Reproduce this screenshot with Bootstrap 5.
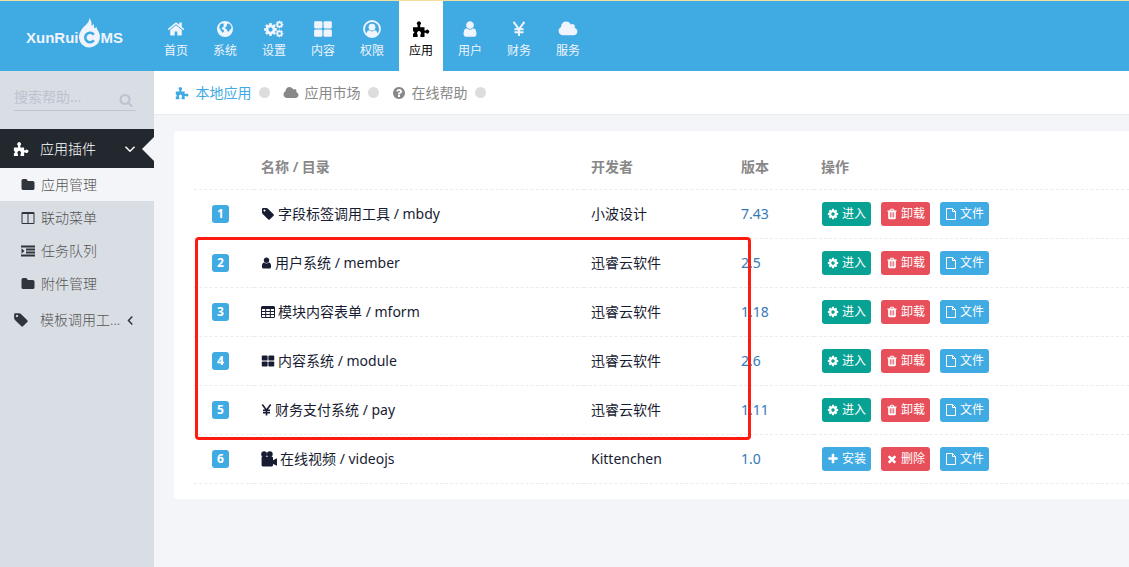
<!DOCTYPE html>
<html lang="zh-CN">
<head>
<meta charset="utf-8">
<meta name="viewport" content="width=device-width, initial-scale=1">
<title>应用管理 - XunRuiCMS</title>
<link rel="stylesheet" href="https://cdn.jsdelivr.net/npm/bootstrap@5.3.0/dist/css/bootstrap.min.css">
<style>
  :root { --brand: #40aae3; --side: #d9dde4; --page: #f4f5f8; }
  body { font-family: "Noto Sans", "Noto Sans CJK SC", sans-serif; font-size: 14px; line-height: 20px; background: var(--page); color: #181c32; }
  .ico { width: 14px; height: 14px; fill: currentColor; flex: none; }
  .ico-wide { width: 16px; height: 16px; fill: currentColor; flex: none; }
  .ico-slim { width: 11px; height: 14px; fill: currentColor; flex: none; }
  .ico-lg { width: 20px; height: 18px; fill: currentColor; margin-bottom: 2px; }

  .topbar { background: var(--brand); border-top: 1px solid #f0dfa0; height: 71px; }
  .brand-box { width: 154px; padding-left: 26px; flex: none; color: #f0f4fd; font: bold 15px/20px "Liberation Sans", sans-serif; }
  .brand-box:hover { color: #f0f4fd; }
  .brand-box span { margin-top: 4px; }
  .brand-box svg { width: 22px; height: 30px; fill: currentColor; margin-bottom: 6px; }
  .topnav { gap: 5px; }
  .topnav .nav-link { width: 44px; height: 70px; padding: 19px 0 0; color: #f0f4fd; font-size: 12px; line-height: 22px; text-align: center; }
  .topnav .nav-link.active { background: #fff; color: #000; }

  .side { width: 154px; flex: none; background: var(--side); }
  .search { margin: 14px 18px 18px 14px; border-bottom: 1px solid #bfc6d1; height: 26px; }
  .search input { min-width: 0; background: none; border: 0; padding: 0 0 2px; font-size: 14px; line-height: 20px; outline: 0; color: #555; }
  .search input::placeholder { color: #bcc3cf; }
  .search button { border: 0; background: none; padding: 4px 3px 0 0; color: #bcc3cf; }
  .side .nav-link { color: #555; font-weight: 300; padding: 0 0 0 21px; height: 33px; gap: 6px; }
  .side .nav-link svg { color: #2f353b; }
  .side .nav-link.group { height: 39px; padding: 0 17px 0 13px; gap: 11px; }
  .side .nav-link.group span { min-width: 0; white-space: nowrap; }
  .side .nav-link.open { background: #22282e; color: #fff; position: relative; }
  .side .nav-link.open svg { color: #fff; }
  .side .nav-link.open::after { content: ""; position: absolute; right: 0; top: 8px; border: 12px solid transparent; border-left: 0; border-right-color: var(--page); }
  .side .nav-link.active { background: var(--page); }

  .tabs { background: #fff; border-bottom: 1px solid #e9ecf1; height: 44px; padding-left: 21px; }
  .tabs a { color: #888; text-decoration: none; gap: 5px; }
  .tabs a.active { color: var(--brand); }
  .dot { width: 11px; height: 11px; border-radius: 50%; background: #ddd; margin: 0 13px 0 8px; }

  .panel { margin: 16px 0 0 20px; padding: 15px 0 15px 20px; background: #fff; border-radius: 4px 0 0 4px; }
  .apps { table-layout: fixed; margin: 0; color: inherit; --bs-table-bg: transparent; }
  .apps th, .apps td { height: 49px; padding: 0 7px; vertical-align: middle; border-bottom: 1px dashed #ececec; color: inherit; }
  .apps thead th { height: 43px; color: #888; font-weight: 600; }
  .apps td:first-child { padding-right: 15px; text-align: center; }
  .apps td:nth-child(4) { color: #337ab7; }
  .c-no { width: 60px; } .c-name { width: 330px; } .c-dev { width: 150px; } .c-ver { width: 80px; }
  .apps .badge { display: block; margin-left: 11px; background: var(--brand); font-size: 12px; line-height: 18px; padding: 0; width: 17px; height: 18px; border-radius: 3px; }
  .app-name { gap: 3px; }
  .ops { gap: 10px; padding-left: 1px; }
  .act { color: #fff; font-size: 12px; line-height: 24px; height: 24px; padding: 0 5px; border: 0; border-radius: 3px; gap: 3px; }
  .act:hover { color: #fff; }
  .act .ico { width: 12px; height: 12px; }
  .act-go { background: #08a294; } .act-del { background: #e7505a; } .act-file { background: var(--brand); }
  .highlight { position: absolute; left: 1px; top: 91px; width: 556px; height: 203px; border: 3px solid #ff1b10; border-radius: 4px; pointer-events: none; }
</style>
</head>
<body class="min-vh-100 d-flex flex-column">

<svg class="d-none">
  <symbol id="home" viewBox="0 0 1792 1792"><path d="M1472 992v480q0 26-19 45t-45 19h-384v-384h-256v384h-384q-26 0-45-19t-19-45v-480q0-1 .5-3t.5-3l575-474 575 474q1 2 1 6zm223-69l-62 74q-8 9-21 11h-3q-13 0-21-7l-692-577-692 577q-12 8-24 7-13-2-21-11l-62-74q-8-10-7-23.500t11-21.500l719-599q32-26 76-26t76 26l244 204v-195q0-14 9-23t23-9h192q14 0 23 9t9 23v408l219 182q10 8 11 21.500t-7 23.500z"/></symbol>
  <symbol id="globe" viewBox="0 0 18 18"><path fill-rule="evenodd" d="M9 1a8 8 0 1 1 0 16A8 8 0 0 1 9 1zM11 4l2.200-.6 2.200 3 .1 1.600-1.600 2-1.300 1.800-1.200-.6-.4-1.800-1.600-.6-.2-1.500 1.500-1zM4 4.800l1.600-1.300 2.600.2-.8 1.400.4 1.300-1.500 1-1 1.100 1.500 1 1.400 1-.6 1.400-1.200.8-1.600-2.400L3.200 8z"/></symbol>
  <symbol id="cog" viewBox="0 0 1792 1792"><path d="M1152 896q0-106-75-181t-181-75-181 75-75 181 75 181 181 75 181-75 75-181zm512-109v222q0 12-8 23t-20 13l-185 28q-19 54-39 91 35 50 107 138 10 12 10 25t-9 23q-27 37-99 108t-94 71q-12 0-26-9l-138-108q-44 23-91 38-16 136-29 186-7 28-36 28h-222q-14 0-24.500-8.500t-11.500-21.500l-28-184q-49-16-90-37l-141 107q-10 9-25 9-14 0-25-11-126-114-165-168-7-10-7-23 0-12 8-23 15-21 51-66.500t54-70.500q-27-50-41-99l-183-27q-13-2-21-12.500t-8-23.500v-222q0-12 8-23t19-13l186-28q14-46 39-92-40-57-107-138-10-12-10-24 0-10 9-23 26-36 98.500-107.500t94.500-71.500q13 0 26 10l138 107q44-23 91-38 16-136 29-186 7-28 36-28h222q14 0 24.500 8.500t11.500 21.500l28 184q49 16 90 37l142-107q9-9 24-9 13 0 25 10 129 119 165 170 7 8 7 22 0 12-8 23-15 21-51 66.500t-54 70.500q26 50 41 98l183 28q13 2 21 12.500t8 23.500z"/></symbol>
  <symbol id="cogs" viewBox="0 0 20 18"><use href="#cog" x="-1" y="2" width="15" height="15"/><use href="#cog" x="11" y="0" width="9" height="9"/><use href="#cog" x="11" y="9" width="9" height="9"/></symbol>
  <symbol id="grid" viewBox="0 0 18 16"><rect x="1" y="1" width="7.500" height="6.500" rx="1.200"/><rect x="9.500" y="1" width="7.500" height="6.500" rx="1.200"/><rect x="1" y="8.500" width="7.500" height="6.500" rx="1.200"/><rect x="9.500" y="8.500" width="7.500" height="6.500" rx="1.200"/></symbol>
  <symbol id="user-circle" viewBox="0 0 18 18"><circle cx="9" cy="9" r="8" fill="none" stroke="currentColor" stroke-width="1.800"/><circle cx="9" cy="7.200" r="3.400"/><path d="M3 14.500c.4-2.300 1.300-3.800 3-4.200 1.800 1.500 4.200 1.500 6 0 1.700.4 2.600 1.900 3 4.200-3.400 3.200-8.600 3.200-12 0z"/></symbol>
  <symbol id="puzzle" viewBox="0 0 18 18"><path fill-rule="evenodd" d="M1 7.200h4.600V5.100a2.100 2.100 0 1 1 2.600 0v2.100h4.300v3.200h1.400a1.900 1.900 0 1 1 0 2.400h-1.400V17H8.400v-2.400a2 2 0 1 0-2.800 0V17H1v-3.400c1.500.2 1.900-2.200 0-2.400z"/></symbol>
  <symbol id="user" viewBox="128 0 1536 1792"><path d="M1536 1399q0 109-62.500 187t-150.500 78h-854q-88 0-150.500-78t-62.500-187q0-85 8.500-160.500t31.500-152 58.500-131 94-89 134.500-34.500q131 128 313 128t313-128q76 0 134.500 34.500t94 89 58.500 131 31.500 152 8.500 160.500zm-256-887q0 159-112.500 271.500t-271.500 112.500-271.500-112.500-112.500-271.500 112.500-271.500 271.500-112.500 271.500 112.500 112.500 271.500z"/></symbol>
  <symbol id="yen" viewBox="2 0 10 14"><path d="M2.800 1.500L7 7.200 11.200 1.500M7 7v5.500M3.500 7.200h7M3.500 9.600h7" fill="none" stroke="currentColor" stroke-width="1.600"/></symbol>
  <symbol id="cloud" viewBox="0 0 2048 1792"><path d="M1984 1152q0 159-112.500 271.500t-271.500 112.500h-1088q-185 0-316.500-131.500t-131.500-316.500q0-132 71-241.500t187-163.500q-2-28-2-43 0-212 150-362t362-150q158 0 286.500 88t187.500 230q70-62 166-62 106 0 181 75t75 181q0 75-41 138 129 30 213 134.500t84 239.500z"/></symbol>
  <symbol id="search" viewBox="0 0 1792 1792"><path d="M1216 832q0-185-131.500-316.500t-316.500-131.500-316.500 131.500-131.500 316.500 131.500 316.500 316.500 131.500 316.500-131.500 131.500-316.500zm512 832q0 52-38 90t-90 38q-54 0-90-38l-343-342q-179 124-399 124-143 0-273.500-55.500t-225-150-150-225-55.500-273.500 55.500-273.500 150-225 225-150 273.500-55.500 273.500 55.500 225 150 150 225 55.500 273.500q0 220-124 399l343 343q37 37 37 90z"/></symbol>
  <symbol id="down" viewBox="0 0 14 14"><path d="M2.500 4.800L7 9.300l4.500-4.500" fill="none" stroke="currentColor" stroke-width="1.500"/></symbol>
  <symbol id="left" viewBox="0 0 14 14"><path d="M9.300 3.500L5.500 7.500l3.800 4" fill="none" stroke="currentColor" stroke-width="1.500"/></symbol>
  <symbol id="folder" viewBox="0 0 1792 1792"><path d="M1728 608v704q0 92-66 158t-158 66h-1216q-92 0-158-66t-66-158v-960q0-92 66-158t158-66h320q92 0 158 66t66 158v32h672q92 0 158 66t66 158z"/></symbol>
  <symbol id="columns" viewBox="0 0 1792 1792"><path d="M224 1536h608v-1152h-640v1120q0 13 9.500 22.500t22.500 9.500zm1376-32v-1120h-640v1152h608q13 0 22.500-9.500t9.500-22.500zm128-1216v1216q0 66-47 113t-113 47h-1344q-66 0-113-47t-47-113v-1216q0-66 47-113t113-47h1344q66 0 113 47t47 113z"/></symbol>
  <symbol id="indent" viewBox="0 0 14 14"><path d="M0 1.500h14v2H0zM5 4.500h9v2H5zM5 7.500h9v2H5zM0 10.500h14v2H0zM.5 4.300L3.500 7l-3 2.700z"/></symbol>
  <symbol id="tag" viewBox="0 0 1792 1792"><path d="M576 448q0-53-37.500-90.500t-90.500-37.500-90.500 37.500-37.500 90.500 37.500 90.500 90.500 37.500 90.500-37.500 37.500-90.500zm1067 576q0 53-37 90l-491 492q-39 37-91 37-53 0-90-37l-715-716q-38-37-64.500-101t-26.500-117v-416q0-52 38-90t90-38h416q53 0 117 26.500t102 64.500l715 714q37 39 37 91z"/></symbol>
  <symbol id="help" viewBox="0 0 1792 1792"><path d="M1024 1376v-192q0-14-9-23t-23-9h-192q-14 0-23 9t-9 23v192q0 14 9 23t23 9h192q14 0 23-9t9-23zm256-672q0-88-55.500-163t-138.500-116-170-41q-243 0-371 213-15 24 8 42l132 100q7 6 19 6 16 0 25-12 53-68 86-92 34-24 86-24 48 0 85.500 26t37.500 59q0 38-20 61t-68 45q-63 28-115.500 86.500t-52.500 125.500v36q0 14 9 23t23 9h192q14 0 23-9t9-23q0-19 21.500-49.500t54.500-49.500q32-18 49-28.500t46-35 44.500-48 28-60.500 12.500-81zm384 192q0 209-103 385.500t-279.500 279.500-385.500 103-385.500-103-279.500-279.500-103-385.500 103-385.500 279.500-279.500 385.500-103 385.500 103 279.500 279.500 103 385.500z"/></symbol>
  <symbol id="table" viewBox="0 0 14 14"><path fill-rule="evenodd" d="M1.500 1h11A1.500 1.500 0 0 1 14 2.500v9a1.500 1.500 0 0 1-1.500 1.500h-11A1.500 1.500 0 0 1 0 11.500v-9A1.500 1.500 0 0 1 1.500 1zM1 4h3.200v2H1zM5.200 4h3.600v2H5.200zM9.800 4H13v2H9.800zM1 7h3.200v2H1zM5.200 7h3.600v2H5.200zM9.800 7H13v2H9.800zM1 10h3.200v2H1zM5.200 10h3.600v2H5.200zM9.800 10H13v2H9.800z"/></symbol>
  <symbol id="film" viewBox="0 0 14 14"><circle cx="2.700" cy="2.800" r="2.500"/><circle cx="7.700" cy="2.800" r="2.500"/><path d="M1 5h8.500a1 1 0 0 1 1 1V8L14 6.300V13l-3.500-1.700v1.200a1 1 0 0 1-1 1H1.500a1 1 0 0 1-1-1V5.500z"/></symbol>
  <symbol id="trash" viewBox="0 0 1792 1792"><path d="M704 1376v-704q0-14-9-23t-23-9h-64q-14 0-23 9t-9 23v704q0 14 9 23t23 9h64q14 0 23-9t9-23zm256 0v-704q0-14-9-23t-23-9h-64q-14 0-23 9t-9 23v704q0 14 9 23t23 9h64q14 0 23-9t9-23zm256 0v-704q0-14-9-23t-23-9h-64q-14 0-23 9t-9 23v704q0 14 9 23t23 9h64q14 0 23-9t9-23zm-544-992h448l-48-117q-7-9-17-11h-317q-10 2-17 11zm928 32v64q0 14-9 23t-23 9h-96v948q0 83-47 143.500t-113 60.500h-832q-66 0-113-58.500t-47-141.500v-952h-96q-14 0-23-9t-9-23v-64q0-14 9-23t23-9h309l70-167q15-37 54-63t79-26h320q40 0 79 26t54 63l70 167h309q14 0 23 9t9 23z"/></symbol>
  <symbol id="file" viewBox="0 0 12 12"><path d="M1.500.5h6l3 3v8h-9zM7.500.5v3h3" fill="none" stroke="currentColor" stroke-width="1"/></symbol>
  <symbol id="plus" viewBox="0 0 1792 1792"><path d="M1600 736v192q0 40-28 68t-68 28h-416v416q0 40-28 68t-68 28h-192q-40 0-68-28t-28-68v-416h-416q-40 0-68-28t-28-68v-192q0-40 28-68t68-28h416v-416q0-40 28-68t68-28h192q40 0 68 28t28 68v416h416q40 0 68 28t28 68z"/></symbol>
  <symbol id="times" viewBox="0 0 1792 1792"><path d="M1490 1322q0 40-28 68l-136 136q-28 28-68 28t-68-28l-294-294-294 294q-28 28-68 28t-68-28l-136-136q-28-28-28-68t28-68l294-294-294-294q-28-28-28-68t28-68l136-136q28-28 68-28t68 28l294 294 294-294q28-28 68-28t68 28l136 136q28 28 28 68t-28 68l-294 294 294 294q28 28 28 68z"/></symbol>
</svg>

<header class="topbar d-flex">
  <a class="brand-box d-flex align-items-center text-decoration-none" href="#"><span>XunRui</span><svg viewBox="0 0 22 30"><path d="M10.500 0c2 3 2.500 5.500 1.800 7.800 1.300-.3 1.700-1 1.700-2 1.500 1.800 1.200 3 1 4.500 1.200-.2 2-.6 2.500-1.500.2 2 .8 3 2 4.800A10.500 10.500 0 1 1 1.800 13C3.500 8.500 10 6.500 10.500 0z"/><path d="M14.800 16.800a4.700 4.700 0 1 0 0 5.400" fill="none" stroke="#40aae3" stroke-width="2.600"/></svg><span>MS</span></a>
  <nav class="nav topnav flex-nowrap">
    <a class="nav-link" href="#"><svg class="ico-lg d-block mx-auto"><use href="#home"/></svg>首页</a>
    <a class="nav-link" href="#"><svg class="ico-lg d-block mx-auto"><use href="#globe"/></svg>系统</a>
    <a class="nav-link" href="#"><svg class="ico-lg d-block mx-auto"><use href="#cogs"/></svg>设置</a>
    <a class="nav-link" href="#"><svg class="ico-lg d-block mx-auto"><use href="#grid"/></svg>内容</a>
    <a class="nav-link" href="#"><svg class="ico-lg d-block mx-auto"><use href="#user-circle"/></svg>权限</a>
    <a class="nav-link active" href="#"><svg class="ico-lg d-block mx-auto"><use href="#puzzle"/></svg>应用</a>
    <a class="nav-link" href="#"><svg class="ico-lg d-block mx-auto"><use href="#user"/></svg>用户</a>
    <a class="nav-link" href="#"><svg class="ico-lg d-block mx-auto"><use href="#yen"/></svg>财务</a>
    <a class="nav-link" href="#"><svg class="ico-lg d-block mx-auto"><use href="#cloud"/></svg>服务</a>
  </nav>
</header>

<div class="d-flex flex-grow-1">
  <aside class="side">
    <form class="search d-flex">
      <input class="flex-grow-1" type="text" placeholder="搜索帮助..." aria-label="搜索帮助">
      <button type="button" aria-label="搜索"><svg class="ico d-block"><use href="#search"/></svg></button>
    </form>
    <nav class="nav flex-column flex-nowrap">
      <a class="nav-link group open d-flex align-items-center" href="#"><svg class="ico-wide"><use href="#puzzle"/></svg><span class="flex-grow-1">应用插件</span><svg class="ico"><use href="#down"/></svg></a>
      <a class="nav-link active d-flex align-items-center" href="#"><svg class="ico"><use href="#folder"/></svg>应用管理</a>
      <a class="nav-link d-flex align-items-center" href="#"><svg class="ico"><use href="#columns"/></svg>联动菜单</a>
      <a class="nav-link d-flex align-items-center" href="#"><svg class="ico"><use href="#indent"/></svg>任务队列</a>
      <a class="nav-link d-flex align-items-center" href="#"><svg class="ico"><use href="#folder"/></svg>附件管理</a>
      <a class="nav-link group d-flex align-items-center" href="#"><svg class="ico-wide"><use href="#tag"/></svg><span class="flex-grow-1">模板调用工...</span><svg class="ico"><use href="#left"/></svg></a>
    </nav>
  </aside>

  <main class="flex-grow-1 overflow-hidden">
    <nav class="tabs d-flex align-items-center">
      <a class="active d-flex align-items-center" href="#"><svg class="ico"><use href="#puzzle"/></svg><span class="ps-0 ms-0">&#8202;本地应用</span></a><span class="dot"></span>
      <a class="d-flex align-items-center" href="#"><svg class="ico-wide"><use href="#cloud"/></svg>应用市场</a><span class="dot"></span>
      <a class="d-flex align-items-center" href="#"><svg class="ico"><use href="#help"/></svg>在线帮助</a><span class="dot"></span>
    </nav>

    <section class="panel">
      <div class="position-relative">
        <table class="table apps">
          <thead>
            <tr><th class="c-no"></th><th class="c-name">名称 / 目录</th><th class="c-dev">开发者</th><th class="c-ver">版本</th><th>操作</th></tr>
          </thead>
          <tbody>
            <tr>
              <td><span class="badge">1</span></td>
              <td><div class="app-name d-flex align-items-center"><svg class="ico"><use href="#tag"/></svg>字段标签调用工具 / mbdy</div></td>
              <td>小波设计</td><td>7.43</td>
              <td><div class="d-flex ops"><button class="btn act act-go d-flex align-items-center"><svg class="ico"><use href="#cog"/></svg>进入</button><button class="btn act act-del d-flex align-items-center"><svg class="ico"><use href="#trash"/></svg>卸载</button><button class="btn act act-file d-flex align-items-center"><svg class="ico"><use href="#file"/></svg>文件</button></div></td>
            </tr>
            <tr>
              <td><span class="badge">2</span></td>
              <td><div class="app-name d-flex align-items-center"><svg class="ico-slim"><use href="#user"/></svg>用户系统 / member</div></td>
              <td>迅睿云软件</td><td>2.5</td>
              <td><div class="d-flex ops"><button class="btn act act-go d-flex align-items-center"><svg class="ico"><use href="#cog"/></svg>进入</button><button class="btn act act-del d-flex align-items-center"><svg class="ico"><use href="#trash"/></svg>卸载</button><button class="btn act act-file d-flex align-items-center"><svg class="ico"><use href="#file"/></svg>文件</button></div></td>
            </tr>
            <tr>
              <td><span class="badge">3</span></td>
              <td><div class="app-name d-flex align-items-center"><svg class="ico"><use href="#table"/></svg>模块内容表单 / mform</div></td>
              <td>迅睿云软件</td><td>1.18</td>
              <td><div class="d-flex ops"><button class="btn act act-go d-flex align-items-center"><svg class="ico"><use href="#cog"/></svg>进入</button><button class="btn act act-del d-flex align-items-center"><svg class="ico"><use href="#trash"/></svg>卸载</button><button class="btn act act-file d-flex align-items-center"><svg class="ico"><use href="#file"/></svg>文件</button></div></td>
            </tr>
            <tr>
              <td><span class="badge">4</span></td>
              <td><div class="app-name d-flex align-items-center"><svg class="ico"><use href="#grid"/></svg>内容系统 / module</div></td>
              <td>迅睿云软件</td><td>2.6</td>
              <td><div class="d-flex ops"><button class="btn act act-go d-flex align-items-center"><svg class="ico"><use href="#cog"/></svg>进入</button><button class="btn act act-del d-flex align-items-center"><svg class="ico"><use href="#trash"/></svg>卸载</button><button class="btn act act-file d-flex align-items-center"><svg class="ico"><use href="#file"/></svg>文件</button></div></td>
            </tr>
            <tr>
              <td><span class="badge">5</span></td>
              <td><div class="app-name d-flex align-items-center"><svg class="ico-slim"><use href="#yen"/></svg>财务支付系统 / pay</div></td>
              <td>迅睿云软件</td><td>1.11</td>
              <td><div class="d-flex ops"><button class="btn act act-go d-flex align-items-center"><svg class="ico"><use href="#cog"/></svg>进入</button><button class="btn act act-del d-flex align-items-center"><svg class="ico"><use href="#trash"/></svg>卸载</button><button class="btn act act-file d-flex align-items-center"><svg class="ico"><use href="#file"/></svg>文件</button></div></td>
            </tr>
            <tr>
              <td><span class="badge">6</span></td>
              <td><div class="app-name d-flex align-items-center"><svg class="ico-wide"><use href="#film"/></svg>在线视频 / videojs</div></td>
              <td>Kittenchen</td><td>1.0</td>
              <td><div class="d-flex ops"><button class="btn act act-file d-flex align-items-center"><svg class="ico"><use href="#plus"/></svg>安装</button><button class="btn act act-del d-flex align-items-center"><svg class="ico"><use href="#times"/></svg>删除</button><button class="btn act act-file d-flex align-items-center"><svg class="ico"><use href="#file"/></svg>文件</button></div></td>
            </tr>
          </tbody>
        </table>
        <div class="highlight"></div>
      </div>
    </section>
  </main>
</div>
<script src="https://cdn.jsdelivr.net/npm/bootstrap@5.3.0/dist/js/bootstrap.bundle.min.js"></script>
</body>
</html>
